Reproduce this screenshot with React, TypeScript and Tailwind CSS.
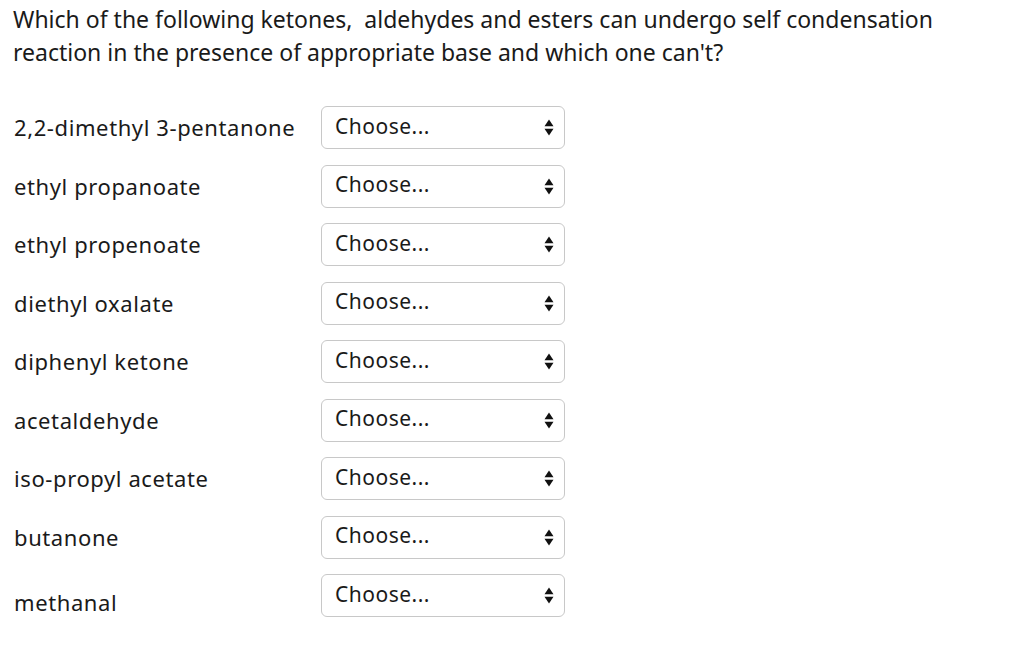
const items = [
  "2,2-dimethyl 3-pentanone",
  "ethyl propanoate",
  "ethyl propenoate",
  "diethyl oxalate",
  "diphenyl ketone",
  "acetaldehyde",
  "iso-propyl acetate",
  "butanone",
  "methanal",
];

function Arrows() {
  return (
    <svg width="10" height="17" viewBox="0 0 10 17" className="shrink-0">
      <path d="M5 0.5 L9.5 7.3 L0.5 7.3 Z" fill="#111" />
      <path d="M0.5 9.7 L9.5 9.7 L5 16.5 Z" fill="#111" />
    </svg>
  );
}

export default function App() {
  return (
    <div className="w-[1024px] h-[647px] bg-white text-[#1a1a1a] font-['Noto_Sans','Open_Sans',sans-serif]">
      <div className="pl-[13px] pt-[3px] text-[23px] leading-[33px]">
        <p>Which of the following ketones,&nbsp; aldehydes and esters can undergo self condensation</p>
        <p>reaction in the presence of appropriate base and which one can't?</p>
      </div>

      <div className="mt-[37px] flex flex-col gap-[15.5px]">
        {items.map((name, i) => (
          <div key={name} className="flex items-center pl-[14px]">
            <span
              className={
                "w-[307px] text-[22px] leading-[33px] tracking-[0.6px] " +
                (i === items.length - 1 ? "self-end -mb-[2px]" : "")
              }
            >
              {name}
            </span>
            <div className="w-[244px] h-[43px] rounded-[6px] border border-[#c8c8c8] flex items-center justify-between pl-[13px] pr-[10px]">
              <span className="text-[21px] tracking-[0.5px] -mt-[2px]">Choose...</span>
              <Arrows />
            </div>
          </div>
        ))}
      </div>
    </div>
  );
}
